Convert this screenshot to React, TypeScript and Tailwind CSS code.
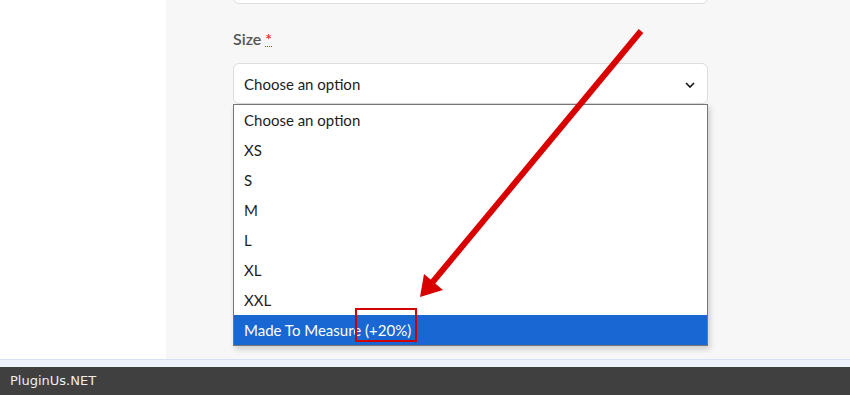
import React from "react";

const options = ["Choose an option", "XS", "S", "M", "L", "XL", "XXL", "Made To Measure (+20%)"];

export default function App() {
  return (
    <div className="relative w-[850px] h-[395px] overflow-hidden bg-white" style={{ fontFamily: "Lato, 'Open Sans', sans-serif" }}>
      <div className="flex h-[359px]">
        <div className="w-[166px] bg-white" />
        <div className="flex-1 bg-[#f7f7f7] pl-[67px] pr-[142px]">
          <div className="h-[2px] -mt-[10px] pt-[12px] border border-[#dddddd] rounded-[6px] bg-white" />
          <div className="mt-[25px] h-[20px] flex items-center text-[16px] font-semibold text-[#555555]">
            <span>Size</span>
            <abbr className="ml-[4px] text-[#e2231a] no-underline border-b border-dotted border-[#e2231a] leading-[14px]">*</abbr>
          </div>
          <div className="mt-[14px] h-[41px] bg-white border border-[#dddddd] rounded-[6px] flex items-center justify-between pl-[10px] pr-[12px] pt-[2px] text-[15px] text-[#1d1d1d]">
            <span>Choose an option</span>
            <svg width="10" height="6" viewBox="0 0 10 6" fill="none" stroke="#111" strokeWidth="1.6">
              <path d="M1 1l4 4 4-4" />
            </svg>
          </div>
          <div className="mt-0 bg-white border border-[#767676] shadow-[2px_3px_6px_rgba(0,0,0,0.18)] flex flex-col">
            {options.map((o, i) => (
              <div
                key={o}
                className={
                  "h-[30px] flex items-center pl-[10px] pt-[1px] text-[15px] " +
                  (i === options.length - 1 ? "bg-[#1967d2] text-white" : "text-[#1d1d1d]")
                }
              >
                {o}
              </div>
            ))}
          </div>
        </div>
      </div>
      <div className="h-[1px] bg-[#d3e2f7]" />
      <div className="h-[7px] bg-[#edf2fb]" />
      <div className="h-[28px] bg-[#404040] flex items-center pl-[10px] text-[13px] text-[#eeeeee]" style={{ fontFamily: "'DejaVu Sans', sans-serif" }}>
        PluginUs.NET
      </div>
      <div className="absolute left-[355px] top-[308px] w-[62px] h-[34px] border-2 border-[#d10000]" />
      <svg className="absolute left-0 top-0" width="850" height="395" viewBox="0 0 850 395">
        <line x1="641" y1="31" x2="431" y2="284" stroke="#d90000" strokeWidth="6" />
        <polygon points="420,297 424,274 443,290" fill="#d90000" />
      </svg>
    </div>
  );
}
